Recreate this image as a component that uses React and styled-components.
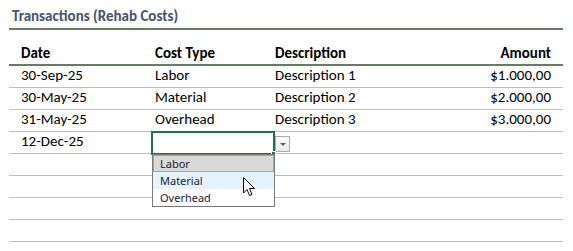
import React from 'react'
import styled, { createGlobalStyle } from 'styled-components'

const GlobalStyle = createGlobalStyle`
	body {
		margin: 0;
		background: #fff;
		font-family: Calibri, Carlito, Lato, 'Liberation Sans', sans-serif;
		color: #000;
	}
`

const Sheet = styled.div`
	width: 554px;
	padding-left: 9px;
`

const Title = styled.div`
	height: 30px;
	box-sizing: border-box;
	border-bottom: 2px solid #687a68;
	padding: 0 0 3px 3px;
	display: flex;
	align-items: flex-end;
	font-size: 15px;
	font-weight: 700;
	line-height: 17px;
	color: #44546a;
`

const Row = styled.div`
	display: grid;
	grid-template-columns: 134px 120px 1fr 150px;
	align-items: end;
	height: ${(p) => (p.$head ? '36px' : '22px')};
	box-sizing: border-box;
	padding-bottom: ${(p) => (p.$head ? '2px' : '3px')};
	border-bottom: ${(p) => (p.$head ? '2px solid #687a68' : '1px solid #bfbfbf')};
	font-size: 15px;
	font-weight: ${(p) => (p.$head ? 700 : 400)};
`

const Cell = styled.div`
	position: relative;
	padding: 0 12px;
	text-align: ${(p) => (p.$right ? 'right' : 'left')};
	white-space: nowrap;
	line-height: 17px;
`

const Editor = styled.div`
	position: absolute;
	left: 8px;
	top: -19px;
	width: 124px;
	height: 24px;
	box-sizing: border-box;
	border: 2px solid #217346;
	z-index: 2;

	&::after {
		content: '';
		position: absolute;
		right: -3px;
		bottom: -3px;
		width: 5px;
		height: 5px;
		box-sizing: border-box;
		background: #217346;
		border: 1px solid #fff;
	}
`

const ArrowButton = styled.div`
	position: absolute;
	left: 122px;
	top: 3px;
	width: 15px;
	height: 16px;
	box-sizing: border-box;
	border: 1px solid #acacac;
	background: linear-gradient(#fdfdfd, #e9e9e9);
	display: flex;
	align-items: center;
	justify-content: center;

	&::before {
		content: '';
		border-left: 3px solid transparent;
		border-right: 3px solid transparent;
		border-top: 3px solid #606060;
	}
`

const List = styled.div`
	position: absolute;
	left: -1px;
	top: 21px;
	width: 123px;
	box-sizing: border-box;
	border: 1px solid #7a7a7a;
	background: #fff;
	font-family: 'Noto Sans', 'Open Sans', sans-serif;
	font-size: 11px;
	color: #1a1a33;
	z-index: 3;
`

const Option = styled.div`
	height: 17px;
	line-height: 15px;
	padding-left: 6px;
	box-sizing: border-box;
	background: ${(p) => (p.$selected ? '#d9d9d9' : p.$hot ? '#e5f3ff' : '#fff')};
	border: 1px solid ${(p) => (p.$selected ? '#a6a6a6' : 'transparent')};
`

const Pointer = styled.svg`
	position: absolute;
	left: 90px;
	top: 22px;
	z-index: 4;
`

const rows = [
	['30-Sep-25', 'Labor', 'Description 1', '$1.000,00'],
	['30-May-25', 'Material', 'Description 2', '$2.000,00'],
	['31-May-25', 'Overhead', 'Description 3', '$3.000,00']
]

export default function App() {
	return (
		<>
			<GlobalStyle />
			<Sheet>
				<Title>Transactions (Rehab Costs)</Title>
				<Row $head>
					<Cell>Date</Cell>
					<Cell>Cost Type</Cell>
					<Cell>Description</Cell>
					<Cell $right>Amount</Cell>
				</Row>
				{rows.map((r) => (
					<Row key={r[0]}>
						<Cell>{r[0]}</Cell>
						<Cell>{r[1]}</Cell>
						<Cell>{r[2]}</Cell>
						<Cell $right>{r[3]}</Cell>
					</Row>
				))}
				<Row>
					<Cell>12-Dec-25</Cell>
					<Cell>
						<Editor>
							<ArrowButton />
							<List>
								<Option $selected>Labor</Option>
								<Option $hot>Material</Option>
								<Option>Overhead</Option>
								<Pointer width='13' height='20' viewBox='0 0 13 20'>
									<path
										d='M0.5 0.5 L0.5 16 L4 12.5 L6.5 18.5 L9 17.5 L6.5 11.5 L11.5 11.5 Z'
										fill='#fff'
										stroke='#000'
										strokeWidth='1'
									/>
								</Pointer>
							</List>
						</Editor>
					</Cell>
					<Cell />
					<Cell />
				</Row>
				<Row />
				<Row />
				<Row />
				<Row />
			</Sheet>
		</>
	)
}
